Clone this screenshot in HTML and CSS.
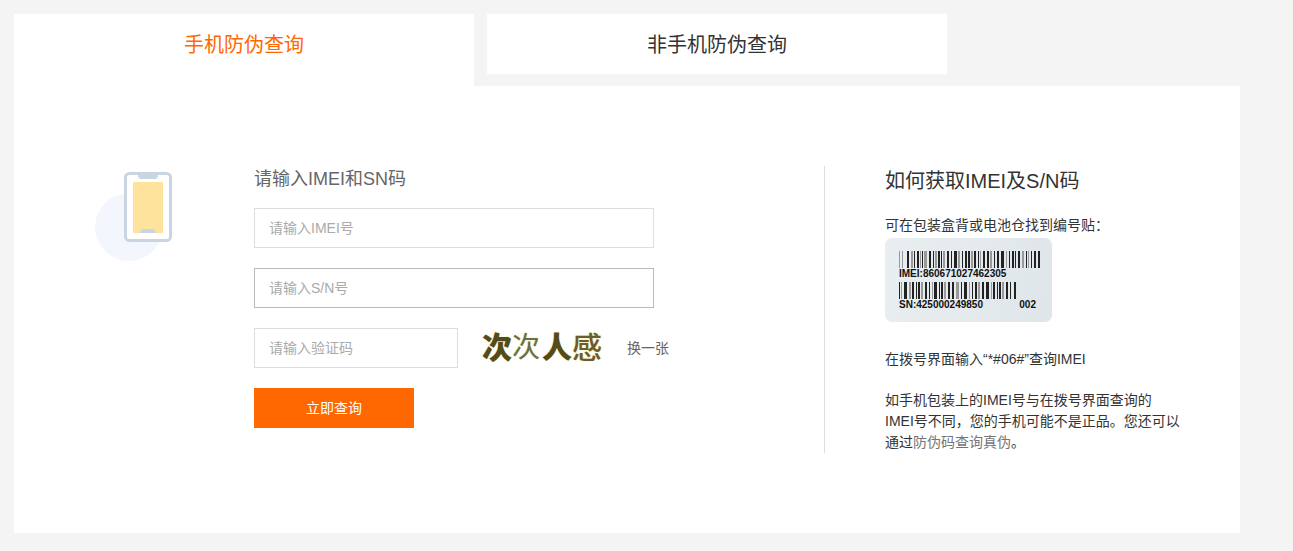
FILE: index.html
```
<!DOCTYPE html>
<html lang="zh-CN">
<head>
    <meta charset="UTF-8">
    <meta name="viewport" content="width=device-width, initial-scale=1.0">
    <title>手机防伪查询</title>
    <link rel="stylesheet" href="styles.css">
</head>
<body>
    <div class="container">
        <nav class="tabs">
            <a href="#phone" class="tab active">手机防伪查询</a>
            <a href="#other" class="tab">非手机防伪查询</a>
        </nav>

        <main class="panel" id="phone">
            <div class="phone-icon">
                <svg width="78" height="91" viewBox="0 0 78 91" aria-hidden="true">
                    <circle cx="34" cy="55" r="34" fill="#f3f7fd"/>
                    <rect x="30.500" y="1.500" width="45" height="67" rx="4" fill="#fff" stroke="#cad5e2" stroke-width="3"/>
                    <path d="M43 2h20c0 4-1 5-4 5H47c-3 0-4-1-4-5z" fill="#cad5e2"/>
                    <rect x="38" y="10" width="30" height="51" fill="#fde39c"/>
                    <path d="M45 61c0-3 1-4 3-4h10c2 0 3 1 3 4z" fill="#cad5e2"/>
                </svg>
            </div>

            <form class="query-form" action="/query" method="POST">
                <h2>请输入IMEI和SN码</h2>
                <input type="text" name="imei" placeholder="请输入IMEI号" aria-label="IMEI号">
                <input type="text" name="sn" class="hovered" placeholder="请输入S/N号" aria-label="S/N号">
                <div class="captcha-row">
                    <input type="text" name="captcha" placeholder="请输入验证码" aria-label="验证码">
                    <div class="captcha"><b>次</b><i>次</i><b>人</b><span>感</span></div>
                    <a href="#refresh" class="refresh">换一张</a>
                </div>
                <button type="submit">立即查询</button>
            </form>

            <aside class="help">
                <h2>如何获取IMEI及S/N码</h2>
                <p>可在包装盒背或电池仓找到编号贴：</p>
                <div class="sticker">
                    <svg class="barcode" width="141" height="17" aria-hidden="true">
                        <path fill="#999" d="M0 0h1v17h-1zM3 0h1v17h-1zM12 0h2v17h-2zM21 0h1v17h-1zM25 0h3v17h-3zM36 0h2v17h-2zM44 0h2v17h-2zM59 0h2v17h-2zM72 0h2v17h-2zM81 0h1v17h-1zM91 0h2v17h-2zM107 0h1v17h-1zM123 0h2v17h-2zM129 0h1v17h-1z"/>
                        <path fill="#222" d="M8 0h2v17h-2zM15 0h1v17h-1zM18 0h2v17h-2zM23 0h1v17h-1zM30 0h2v17h-2zM34 0h1v17h-1zM39 0h2v17h-2zM42 0h1v17h-1zM48 0h2v17h-2zM52 0h1v17h-1zM55 0h3v17h-3zM63 0h1v17h-1zM66 0h2v17h-2zM69 0h2v17h-2zM75 0h2v17h-2zM79 0h1v17h-1zM84 0h2v17h-2zM88 0h2v17h-2zM95 0h1v17h-1zM98 0h2v17h-2zM102 0h3v17h-3zM110 0h1v17h-1zM113 0h2v17h-2zM116 0h1v17h-1zM119 0h2v17h-2zM127 0h1v17h-1zM132 0h1v17h-1zM135 0h2v17h-2zM139 0h2v17h-2z"/>
                    </svg>
                    <div class="code">IMEI:860671027462305</div>
                    <svg class="barcode" width="118" height="17" aria-hidden="true">
                        <path fill="#999" d="M2 0h1v17h-1zM10 0h2v17h-2zM22 0h2v17h-2zM33 0h1v17h-1zM45 0h2v17h-2zM57 0h3v17h-3zM70 0h1v17h-1zM79 0h2v17h-2zM92 0h1v17h-1zM103 0h2v17h-2z"/>
                        <path fill="#222" d="M0 0h1v17h-1zM5 0h3v17h-3zM13 0h2v17h-2zM17 0h1v17h-1zM19 0h2v17h-2zM26 0h2v17h-2zM30 0h1v17h-1zM35 0h3v17h-3zM40 0h1v17h-1zM42 0h2v17h-2zM49 0h2v17h-2zM53 0h2v17h-2zM62 0h1v17h-1zM65 0h3v17h-3zM73 0h1v17h-1zM76 0h2v17h-2zM83 0h2v17h-2zM87 0h3v17h-3zM94 0h2v17h-2zM98 0h1v17h-1zM100 0h2v17h-2zM107 0h2v17h-2zM111 0h1v17h-1zM115 0h2v17h-2z"/>
                    </svg>
                    <div class="code"><span>SN:425000249850</span><span>002</span></div>
                </div>
                <p class="dial">在拨号界面输入“*#06#”查询IMEI</p>
                <p class="note">如手机包装上的IMEI号与在拨号界面查询的IMEI号不同，您的手机可能不是正品。您还可以通过<a href="#code">防伪码查询真伪</a>。</p>
            </aside>
        </main>
    </div>
</body>
</html>
```

FILE: styles.css
```
* {
    box-sizing: border-box;
}

body {
    margin: 0;
    background: #f4f4f4;
    color: #333;
    font: 14px/21px "Liberation Sans", "Noto Sans CJK SC", sans-serif;
}

a {
    text-decoration: none;
}

h2, p {
    margin: 0;
    font-weight: normal;
}

.container {
    max-width: 1293px;
    padding: 14px 53px 18px 14px;
}

.tabs {
    display: flex;
    align-items: flex-start;
    gap: 13px;
    height: 72px;
}

.tab {
    flex: 0 1 460px;
    height: 60px;
    background: #fff;
    color: #333;
    font-size: 20px;
    line-height: 62px;
    text-align: center;
}

.tab.active {
    height: 72px;
    color: #ff6700;
}

.panel {
    display: flex;
    padding: 80px 60px 80px 80px;
    background: #fff;
}

.phone-icon {
    flex: 0 0 160px;
    padding: 6px 0 0 1px;
}

.query-form {
    flex: 1;
    display: flex;
    flex-direction: column;
    align-items: flex-start;
    gap: 20px;
}

.query-form h2 {
    margin-bottom: -4px;
    color: #666;
    font-size: 18px;
    line-height: 26px;
}

input {
    width: 400px;
    height: 40px;
    padding: 0 14px;
    border: 1px solid #ddd;
    font: inherit;
    outline: none;
}

input.hovered {
    border-color: #bbb;
}

::placeholder {
    color: #aaa;
}

.captcha-row {
    display: flex;
    align-items: center;
}

.captcha-row input {
    width: 204px;
}

.captcha {
    display: flex;
    align-items: center;
    width: 120px;
    height: 40px;
    margin: 0 25px 0 24px;
    color: #5c5422;
    font-size: 30px;
    line-height: 40px;
    text-shadow: 0 0 2px #e4ea9a;
}

.captcha b {
    color: #544a1c;
    font-weight: 900;
}

.captcha i {
    color: #6d6e48;
    font-size: 28px;
    font-style: normal;
    width: 30px;
}

.captcha span {
    color: #6e5a2c;
    font-weight: 500;
}

.refresh {
    color: #666;
}

button {
    width: 160px;
    height: 40px;
    border: none;
    background: #ff6700;
    color: #fff;
    font: inherit;
    cursor: pointer;
}

.help {
    flex: 0 0 356px;
    padding-left: 60px;
    border-left: 1px solid #ddd;
}

.help h2 {
    margin-bottom: 19px;
    font-size: 20px;
    line-height: 30px;
}

.sticker {
    width: 167px;
    height: 84px;
    margin-top: 2px;
    padding: 13px 14px;
    border-radius: 7px;
    background: linear-gradient(100deg, #e9eef0, #dfe6ea);
}

.barcode {
    display: block;
}

.code {
    display: flex;
    justify-content: space-between;
    width: 137px;
    margin-bottom: 2px;
    color: #111;
    font-size: 10px;
    font-weight: bold;
    line-height: 12px;
}

.dial {
    margin-top: 27px;
}

.note {
    margin-top: 20px;
}

.note a {
    color: #757575;
}
```
